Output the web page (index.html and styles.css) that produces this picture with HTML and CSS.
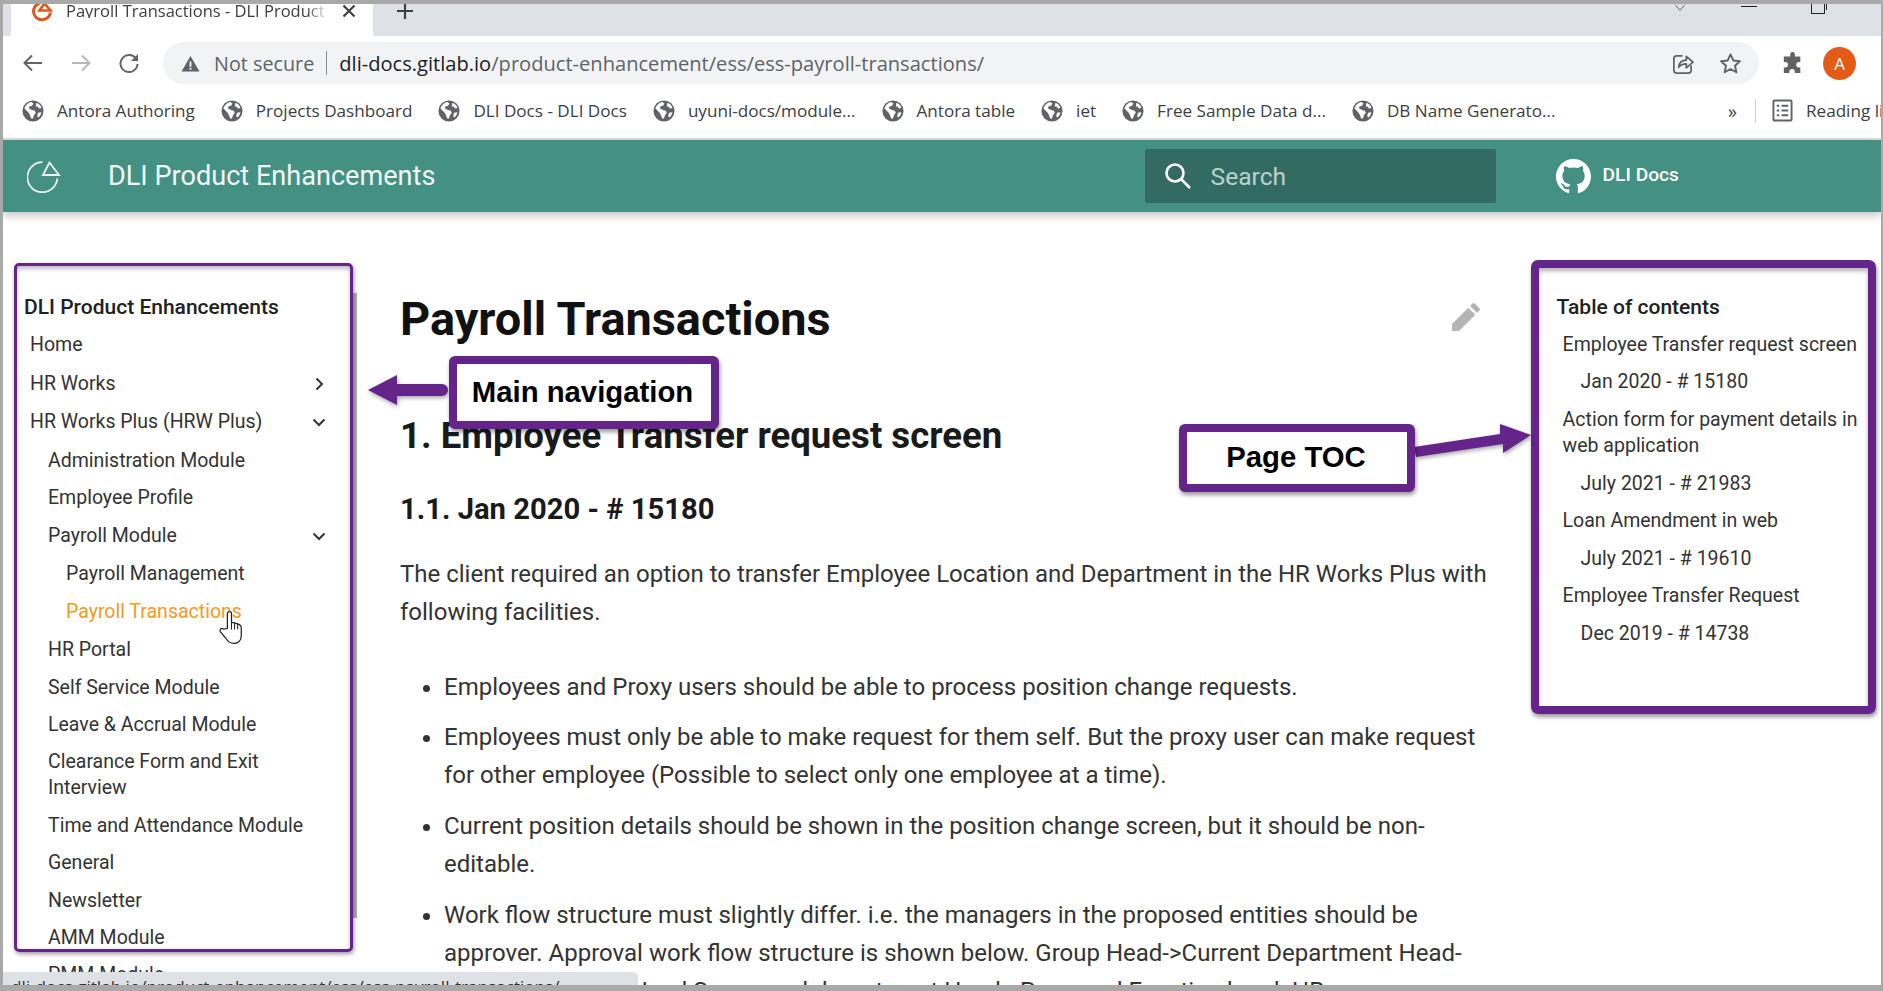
FILE: index.html
```html
<!DOCTYPE html>
<html lang="en">
<head>
<meta charset="utf-8">
<title>Payroll Transactions - DLI Product Enhancements</title>
<link rel="stylesheet" href="styles.css">
</head>
<body>
<svg class="defs" width="0" height="0" aria-hidden="true">
  <symbol id="globe" viewBox="0 0 24 24">
    <circle cx="12" cy="12" r="11.500" fill="#5f6368"/>
    <path fill="#fff" d="M2.500 9C4 5.500 6.500 3 10 2.200l2.500 1.600-1.500 2.400-3 .8-.3 2.400 3.300 1.600 3 .6 1 2.200-2 2.700-1 3.600h-2L8.500 16 7 13.500zM16 3c2.600 1.100 4.400 3.100 5.200 5.600l-2.700.6-1.500-2.200-2 .2.500-3.200zM17.500 14l3.700-.6c-.4 2.400-1.600 4.400-3.400 5.800l-1.200-1.700z"/>
  </symbol>
</svg>
<div class="frame">
  <div class="tabstrip">
    <div class="tab">
      <svg class="tab-icon" viewBox="0 0 22 22"><path d="M8.500 3.200A8.500 8.500 0 1 0 19.500 12.500" fill="none" stroke="#e0561a" stroke-width="3"/><path d="M13.500 3.500L19.500 10.500H8.500z" fill="none" stroke="#e0561a" stroke-width="2.600"/></svg>
      <span class="tab-title">Payroll Transactions - DLI Product Enhancements</span>
      <svg class="tab-close" viewBox="0 0 14 14"><path d="M1.500 1.500l11 11M12.500 1.500l-11 11" stroke="#3c4043" stroke-width="2.200"/></svg>
    </div>
    <svg class="tab-plus" viewBox="0 0 18 18"><path d="M9 1v16M1 9h16" stroke="#3c4043" stroke-width="2.200"/></svg>
    <div class="winctl">
      <svg class="win-chev" viewBox="0 0 14 10"><path d="M1 1l6 7 6-7" fill="none" stroke="#444" stroke-width="1"/></svg>
      <span class="win-min"></span>
      <span class="win-max"></span>
    </div>
  </div>

  <div class="toolbar">
    <svg class="nav-ico nav-back" viewBox="0 0 22 22"><path d="M20 11H3M10 3.500L2.500 11l7.500 7.500" fill="none" stroke="#5f6368" stroke-width="2"/></svg>
    <svg class="nav-ico" viewBox="0 0 22 22"><path d="M2 11h17M12 3.500l7.500 7.500-7.500 7.500" fill="none" stroke="#b5b8bc" stroke-width="2"/></svg>
    <svg class="nav-ico" viewBox="0 0 22 22"><path d="M18.500 7.500A8.500 8.500 0 1 0 19.500 12" fill="none" stroke="#5f6368" stroke-width="2"/><path d="M20 2v7h-7z" fill="#5f6368"/></svg>
    <div class="omnibox">
      <svg class="warn" viewBox="0 0 20 18"><path d="M10 1L19.500 17.500H.5zM9 7v5.500h2V7zM9 13.500v2h2v-2z" fill="#5f6368" fill-rule="evenodd"/></svg>
      <span class="not-secure">Not secure</span>
      <span class="omni-sep"></span>
      <span class="url"><b class="host">dli-docs.gitlab.io</b>/product-enhancement/ess/ess-payroll-transactions/</span>
      <svg class="share" viewBox="0 0 24 24"><path d="M12 4H6a3 3 0 0 0-3 3v12a3 3 0 0 0 3 3h12a3 3 0 0 0 3-3v-5" fill="none" stroke="#5f6368" stroke-width="1.800"/><path d="M8 16c.5-5 4-7.500 8-7.500V4.500l7 6-7 6v-4c-3.500 0-6 1-8 3.500z" fill="#f1f3f4" stroke="#5f6368" stroke-width="1.800" stroke-linejoin="round"/></svg>
      <svg class="star" viewBox="0 0 24 24"><path d="M12 2.500l2.900 6.300 6.900.8-5.100 4.700 1.400 6.800-6.100-3.400-6.100 3.400 1.400-6.800-5.100-4.700 6.900-.8z" fill="none" stroke="#5f6368" stroke-width="2" stroke-linejoin="round"/></svg>
    </div>
    <svg class="puzzle" viewBox="0 0 24 24"><path d="M9 2.500a2.500 2.500 0 0 1 5 0V5h6v6h-1.500a3 3 0 0 0 0 6H20v6h-6v-1.500a3 3 0 0 0-6 0V23H2v-6h1.500a3 3 0 0 0 0-6H2V5h7z" fill="#5f6368"/></svg>
    <span class="avatar">A</span>
  </div>

  <div class="bookmarks">
    <span class="bm"><svg class="bm-ico"><use href="#globe"/></svg>Antora Authoring</span>
    <span class="bm"><svg class="bm-ico"><use href="#globe"/></svg>Projects Dashboard</span>
    <span class="bm"><svg class="bm-ico"><use href="#globe"/></svg>DLI Docs - DLI Docs</span>
    <span class="bm"><svg class="bm-ico"><use href="#globe"/></svg>uyuni-docs/module...</span>
    <span class="bm"><svg class="bm-ico"><use href="#globe"/></svg>Antora table</span>
    <span class="bm"><svg class="bm-ico"><use href="#globe"/></svg>iet</span>
    <span class="bm"><svg class="bm-ico"><use href="#globe"/></svg>Free Sample Data d...</span>
    <span class="bm"><svg class="bm-ico"><use href="#globe"/></svg>DB Name Generato...</span>
    <span class="bm-more">»</span>
    <span class="bm-sep"></span>
    <svg class="rl-ico" viewBox="0 0 22 24"><rect x="1.500" y="1.500" width="19" height="21" rx="1" fill="none" stroke="#5f6368" stroke-width="2"/><path d="M5 7h2.500M10 7h7M5 12h2.500M10 12h7M5 17h2.500M10 17h7" stroke="#5f6368" stroke-width="2"/></svg>
    <span class="bm-reading">Reading list</span>
  </div>

  <header class="site-header">
    <svg class="site-logo" viewBox="0 0 34 34"><path d="M15.500 3.200A15 15 0 1 0 30.300 19.500" fill="none" stroke="#eef6f4" stroke-width="1.800"/><path d="M22.500 3.500L32 16H16z" fill="none" stroke="#eef6f4" stroke-width="1.800"/></svg>
    <span class="site-title">DLI Product Enhancements</span>
    <div class="search">
      <svg class="search-ico" viewBox="0 0 28 28"><circle cx="11" cy="11" r="8.500" fill="none" stroke="#fff" stroke-width="2.600"/><path d="M17 17l9 9" stroke="#fff" stroke-width="2.600"/></svg>
      <span class="search-ph">Search</span>
    </div>
    <svg class="gh" viewBox="0 0 16 16"><path fill="#fff" d="M8 0C3.580 0 0 3.580 0 8c0 3.540 2.290 6.530 5.470 7.590.4.070.55-.17.55-.38 0-.19-.01-.82-.01-1.490-2.010.37-2.530-.49-2.690-.94-.09-.23-.48-.94-.82-1.130-.28-.15-.68-.52-.01-.53.630-.01 1.080.58 1.230.82.720 1.210 1.870.87 2.330.66.070-.52.280-.87.510-1.070-1.780-.2-3.640-.89-3.640-3.950 0-.87.310-1.590.82-2.150-.08-.2-.36-1.020.08-2.120 0 0 .67-.21 2.200.82.640-.18 1.320-.27 2-.27s1.360.09 2 .27c1.530-1.040 2.200-.82 2.200-.82.440 1.100.16 1.920.08 2.120.51.560.82 1.270.82 2.150 0 3.070-1.870 3.750-3.650 3.950.29.250.54.730.54 1.480 0 1.070-.01 1.930-.01 2.200 0 .21.150.46.550.38A8.010 8.010 0 0 0 16 8c0-4.420-3.580-8-8-8z"/></svg>
    <span class="gh-label">DLI Docs</span>
  </header>

  <div class="page">
    <nav class="sidenav">
      <div class="nav-title">DLI Product Enhancements</div>
      <ul class="nav-list">
        <li class="nav-row top">Home</li>
        <li class="nav-row top">HR Works <svg class="chev" viewBox="0 0 14 14"><path d="M4.500 1.500L10 7l-5.500 5.500" fill="none" stroke="#333" stroke-width="2"/></svg></li>
        <li class="nav-row top">HR Works Plus (HRW Plus) <svg class="chev" viewBox="0 0 14 14"><path d="M1.500 4.500L7 10l5.500-5.500" fill="none" stroke="#333" stroke-width="2"/></svg></li>
        <li class="nav-row lvl2 group-start">Administration Module</li>
        <li class="nav-row lvl2">Employee Profile</li>
        <li class="nav-row lvl2">Payroll Module <svg class="chev" viewBox="0 0 14 14"><path d="M1.500 4.500L7 10l5.500-5.500" fill="none" stroke="#333" stroke-width="2"/></svg></li>
        <li class="nav-row lvl3 group-start">Payroll Management</li>
        <li class="nav-row lvl3 active">Payroll Transactions</li>
        <li class="nav-row lvl2 group-start">HR Portal</li>
        <li class="nav-row lvl2">Self Service Module</li>
        <li class="nav-row lvl2">Leave &amp; Accrual Module</li>
        <li class="nav-row lvl2">Clearance Form and Exit Interview</li>
        <li class="nav-row lvl2">Time and Attendance Module</li>
        <li class="nav-row lvl2">General</li>
        <li class="nav-row lvl2">Newsletter</li>
        <li class="nav-row lvl2">AMM Module</li>
        <li class="nav-row lvl2">PMM Module</li>
      </ul>
    </nav>
    <div class="nav-scroll"></div>

    <main class="article">
      <div class="title-row">
        <h1 class="page-title">Payroll Transactions</h1>
        <svg class="pencil" viewBox="0 0 24 24"><path fill="#b5b5b5" d="M0 24v-6L14 4l6 6L6 24zM15.500 2.500l2-2a1.500 1.500 0 0 1 2 0l4 4a1.500 1.500 0 0 1 0 2l-2 2z"/></svg>
      </div>
      <h2 class="h2">1. Employee Transfer request screen</h2>
      <h3 class="h3">1.1. Jan 2020 - # 15180</h3>
      <p class="para">The client required an option to transfer Employee Location and Department in the HR Works Plus with following facilities.</p>
      <ul class="bullets">
        <li>Employees and Proxy users should be able to process position change requests.</li>
        <li>Employees must only be able to make request for them self. But the proxy user can make request for other employee (Possible to select only one employee at a time).</li>
        <li>Current position details should be shown in the position change screen, but it should be non-editable.</li>
        <li>Work flow structure must slightly differ. i.e. the managers in the proposed entities should be approver. Approval work flow structure is shown below. Group Head-&gt;Current Department Head-&gt;Function Head-&gt;Head Sponsored department Head-&gt;Proposed Function head&gt;HR</li>
      </ul>
    </main>

    <aside class="toc">
      <div class="nav-title">Table of contents</div>
      <ul class="nav-list">
        <li class="nav-row">Employee Transfer request screen</li>
        <li class="nav-row lvl2">Jan 2020 - # 15180</li>
        <li class="nav-row">Action form for payment details in web application</li>
        <li class="nav-row lvl2">July 2021 - # 21983</li>
        <li class="nav-row">Loan Amendment in web</li>
        <li class="nav-row lvl2">July 2021 - # 19610</li>
        <li class="nav-row">Employee Transfer Request</li>
        <li class="nav-row lvl2">Dec 2019 - # 14738</li>
      </ul>
    </aside>
  </div>

  <div class="status-bubble"><span>dli-docs.gitlab.io/product-enhancement/ess/ess-payroll-transactions/</span></div>

  <!-- annotations drawn over the screenshot -->
  <div class="anno-nav-box"></div>
  <div class="anno-toc-box"></div>
  <div class="callout callout-nav">Main navigation</div>
  <div class="callout callout-toc">Page TOC</div>
  <svg class="anno-arrows" viewBox="0 0 1883 991">
    <path d="M368 390L397 375V384H442a6 6 0 0 1 0 12H397V405z" fill="#652489"/>
    <path d="M1414 447L1500 434V424L1531 435L1503 453V444L1416 457z" fill="#652489"/>
  </svg>
  <svg class="cursor" viewBox="0 0 24 34"><path d="M8 18V3.500a2 2 0 0 1 4 0V12l6 1.500c2.500.8 3.500 1.800 3.500 4V25c0 4-2.500 7.500-7 7.500-4 0-6-1.500-8-5L1.200 21c-1-2 1-4 3-2.500z" fill="#fff" stroke="#222" stroke-width="1.200"/><path d="M12 11v8M15 12v7M18 13v6" stroke="#222" stroke-width="1"/></svg>
</div>
</body>
</html>
```

FILE: styles.css
```css
* { box-sizing: border-box; }
html, body { margin: 0; padding: 0; height: 100%; overflow: hidden; background: #fff; }
.defs { position: absolute; }

.frame {
  position: relative;
  width: 1883px;
  height: 991px;
  overflow: hidden;
  border-style: solid;
  border-color: #a9a9a9;
  border-width: 4px 2px 6px 3px;
  background: #fff;
  display: flex;
  flex-direction: column;
  font-family: Roboto, sans-serif;
  color: #333;
}

/* browser chrome */
.tabstrip { height: 32px; flex: none; background: #dee1e6; display: flex; align-items: flex-start; position: relative; font-family: "Open Sans", sans-serif; }
.tab { width: 362px; height: 32px; margin-left: 8px; background: #fff; display: flex; align-items: flex-start; padding-left: 20px; position: relative; }
.tab-icon { width: 22px; height: 22px; margin-top: -4px; flex: none; }
.tab-title { margin-left: 13px; width: 262px; flex: none; overflow: hidden; white-space: nowrap; font-size: 16.500px; line-height: 14px; color: #3c4043; -webkit-mask-image: linear-gradient(90deg, #000 92%, transparent); mask-image: linear-gradient(90deg, #000 92%, transparent); }
.tab-close { width: 14px; height: 14px; margin: 0 0 0 14px; flex: none; }
.tab-plus { width: 18px; height: 18px; margin: -2px 0 0 23px; flex: none; }
.winctl { margin-left: auto; display: flex; align-items: flex-start; padding-right: 56px; }
.win-chev { width: 14px; height: 8px; }
.win-min { width: 16px; height: 1px; background: #222; margin: 2px 0 0 54px; }
.win-max { width: 14px; height: 10px; border: 1px solid #222; border-top: 0; margin: 0 0 0 54px; position: relative; }
.win-max::after { content: ""; position: absolute; right: -3px; top: 0; width: 1px; height: 6px; background: #222; }

.toolbar { height: 58px; flex: none; background: #fff; display: flex; align-items: center; padding-left: 19px; padding-bottom: 4px; }
.nav-ico { width: 22px; height: 22px; flex: none; margin-right: 26px; }
.nav-back { margin-right: 26px; }
.omnibox { width: 1596px; height: 42px; margin-left: -3px; background: #f1f3f4; border-radius: 21px; display: flex; align-items: center; padding-left: 18px; flex: none; font-family: "Open Sans", sans-serif; font-size: 20.100px; color: #5f6368; }
.warn { width: 19px; height: 17px; flex: none; }
.not-secure { margin-left: 14px; white-space: nowrap; font-size: 19.800px; }
.omni-sep { width: 1px; height: 24px; background: #8a8d91; margin: 0 12px; flex: none; }
.url { white-space: nowrap; }
.host { font-weight: 400; color: #202124; }
.share { width: 23px; height: 23px; margin-left: auto; flex: none; }
.star { width: 23px; height: 23px; margin: 0 17px 0 25px; flex: none; }
.puzzle { width: 22px; height: 22px; margin-left: 23px; flex: none; }
.avatar { width: 33px; height: 33px; margin-left: 19px; border-radius: 50%; background: #e25c17; color: #fff; font: 400 17px/33px "Open Sans", sans-serif; text-align: center; flex: none; }

.bookmarks { height: 46px; flex: none; background: #fff; border-bottom: 2px solid #dcdcdc; display: flex; align-items: center; padding: 0 0 11px 19px; font-family: "Open Sans", sans-serif; font-size: 17.100px; color: #3c4043; white-space: nowrap; overflow: hidden; }
.bm { display: flex; align-items: center; margin-right: 26px; flex: none; }
.bm-ico { width: 22px; height: 22px; margin-right: 13px; flex: none; }
.bm-more { margin-left: auto; font-size: 18px; flex: none; }
.bm-sep { width: 1px; height: 24px; background: #d0d0d0; margin: 0 16px 0 18px; flex: none; }
.rl-ico { width: 21px; height: 23px; margin-right: 13px; flex: none; }
.bm-reading { width: 75px; overflow: hidden; flex: none; }

/* site header */
.site-header { height: 72px; flex: none; background: #449183; display: flex; align-items: center; color: #fff; box-shadow: 0 4px 8px rgba(0, 0, 0, .22); position: relative; z-index: 1; padding: 0 202px 0 24px; }
.site-logo { width: 34px; height: 34px; flex: none; }
.site-title { margin-left: 47px; font-size: 27.100px; font-weight: 400; white-space: nowrap; color: #f2f8f7; }
.search { width: 351px; height: 54px; margin-left: auto; background: #336b63; border-radius: 2px; display: flex; align-items: center; padding-left: 19px; flex: none; }
.search-ico { width: 28px; height: 28px; flex: none; }
.search-ph { margin-left: 19px; font-size: 24.600px; color: #b9d2cd; }
.gh { width: 35px; height: 35px; margin-left: 60px; flex: none; }
.gh-label { margin-left: 12px; font-size: 19.200px; font-weight: 500; white-space: nowrap; line-height: 20px; padding-bottom: 2px; }

/* page */
.page { flex: 1; min-height: 0; display: flex; align-items: flex-start; overflow: hidden; }
.sidenav { width: 350px; flex: none; padding: 76px 27px 0 21px; }
.nav-scroll { width: 4px; height: 625px; margin-top: 81px; background: #b0b0b0; flex: none; }
.nav-title { font-size: 21px; font-weight: 500; line-height: 26px; padding: 6px 0; color: #212121; }
.nav-list { list-style: none; margin: 0; padding: 0; font-size: 19.500px; line-height: 26px; }
.nav-row { padding: 5.700px 0 5.700px 6px; display: flex; justify-content: space-between; align-items: center; }
.top { padding-top: 6.200px; padding-bottom: 6.200px; }
.group-start { margin-top: 1.200px; }
.lvl2 { padding-left: 24px; }
.lvl3 { padding-left: 42px; }
.active { color: #f7991c; }
.chev { width: 14px; height: 14px; flex: none; }

.article { width: 1090px; flex: none; margin-left: 43px; font-size: 24px; line-height: 38px; }
.title-row { display: flex; justify-content: space-between; align-items: flex-start; padding-top: 77px; }
.page-title { margin: 0; font-size: 46.900px; line-height: 60px; font-weight: 700; color: #111; }
.pencil { width: 28px; height: 28px; margin: 14px 10px 0 0; flex: none; }
.h2 { margin: 64px 0 0; font-size: 36.600px; line-height: 46px; font-weight: 700; color: #1a1a1a; }
.h3 { margin: 27px 0 0; font-size: 29.200px; line-height: 46px; font-weight: 700; color: #1a1a1a; }
.para { margin: 23px 0 0; }
.bullets { margin: 37px 0 0; padding: 0 0 0 44px; }
.bullets li { margin-bottom: 12.400px; }
.bullets li:last-child { margin-top: 13.400px; }

.toc { flex: none; width: 305px; margin-left: 66.600px; padding-top: 76px; }
.toc .nav-row { padding-top: 5.800px; padding-bottom: 5.800px; }

/* overlays */
.status-bubble { position: absolute; left: 0; bottom: 0; width: 635px; height: 13px; background: #dee1e6; border-radius: 0 5px 0 0; overflow: hidden; z-index: 4; font: 17.100px/17px "Open Sans", sans-serif; color: #333; padding: 6px 0 0 8px; white-space: nowrap; }
.anno-nav-box { position: absolute; left: 11px; top: 259px; width: 339px; height: 689px; border: 3px solid #652489; border-radius: 5px; box-shadow: 1px 2px 4px rgba(0, 0, 0, .4), inset 0 3px 4px rgba(0, 0, 0, .25); z-index: 3; }
.anno-toc-box { position: absolute; left: 1528px; top: 256px; width: 345px; height: 454px; border: 8px solid #652489; border-radius: 7px; box-shadow: 1px 3px 4px rgba(0, 0, 0, .4), inset 0 3px 4px rgba(0, 0, 0, .3); z-index: 3; }
.callout { position: absolute; display: flex; align-items: center; justify-content: center; background: #fff; border: 8px solid #652489; border-radius: 6px; font: 700 29.300px "Liberation Sans", sans-serif; color: #000; box-shadow: 1px 3px 4px rgba(0, 0, 0, .4); z-index: 5; padding-bottom: 2px; }
.callout-nav { left: 446px; top: 352px; width: 270px; height: 73px; padding-right: 3px; }
.callout-toc { left: 1176px; top: 420px; width: 236px; height: 68px; padding-right: 2px; }
.anno-arrows { position: absolute; left: -3px; top: -4px; width: 1883px; height: 991px; z-index: 4; pointer-events: none; filter: drop-shadow(1px 2px 2px rgba(0, 0, 0, .35)); }
.cursor { position: absolute; left: 216px; top: 606px; width: 25px; height: 35px; z-index: 5; }
```
